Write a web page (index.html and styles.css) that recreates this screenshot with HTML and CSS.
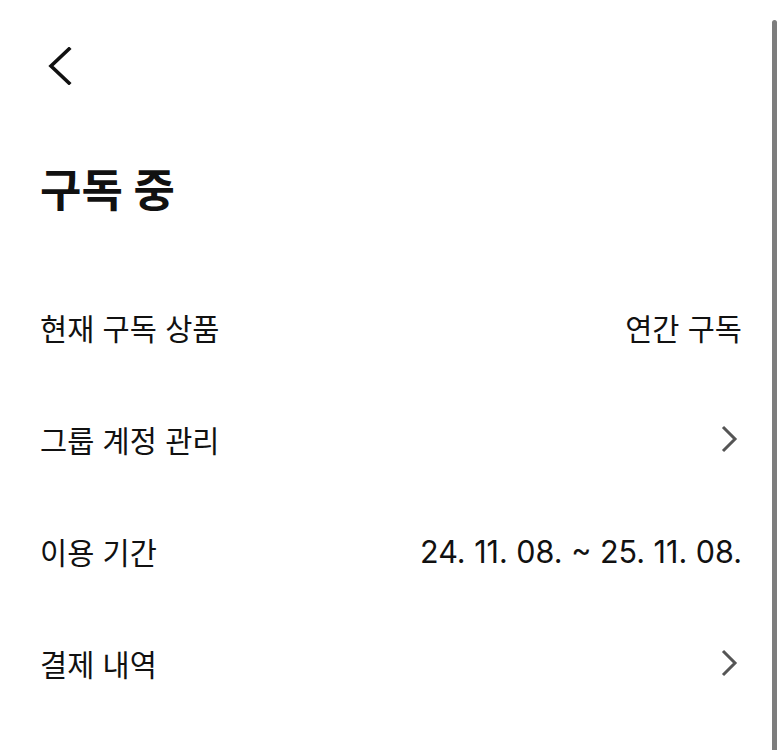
FILE: index.html
```html
<!DOCTYPE html>
<html lang="ko">
<head>
    <meta charset="UTF-8">
    <meta name="viewport" content="width=device-width, initial-scale=1.0">
    <title>구독 중</title>
    <link rel="stylesheet" href="styles.css">
</head>
<body>
    <div class="page">
        <header class="topbar">
            <button class="back-button" aria-label="뒤로">
                <svg width="26" height="38" viewBox="0 0 26 38">
                    <path d="M22 2 L4 19 L22 36" fill="none" stroke="#111" stroke-width="3.6" stroke-linecap="square"/>
                </svg>
            </button>
        </header>

        <h1 class="title">구독 중</h1>

        <ul class="rows">
            <li class="row">
                <span class="label">현재 구독 상품</span>
                <span class="value">연간 구독</span>
            </li>
            <li class="row">
                <span class="label">그룹 계정 관리</span>
                <svg class="chevron" width="18" height="28" viewBox="0 0 18 28">
                    <path d="M3 2 L15 14 L3 26" fill="none" stroke="#555" stroke-width="3"/>
                </svg>
            </li>
            <li class="row">
                <span class="label">이용 기간</span>
                <span class="value date">24. 11. 08. ~ 25. 11. 08.</span>
            </li>
            <li class="row">
                <span class="label">결제 내역</span>
                <svg class="chevron" width="18" height="28" viewBox="0 0 18 28">
                    <path d="M3 2 L15 14 L3 26" fill="none" stroke="#555" stroke-width="3"/>
                </svg>
            </li>
        </ul>

        <div class="scrollbar"></div>
    </div>
</body>
</html>
```

FILE: styles.css
```css
/* Estilos base */
body {
    margin: 0;
    padding: 0;
    background-color: #fff;
    color: #111;
    font-family: Inter, "Noto Sans CJK KR", sans-serif;
}
.page {
    position: relative;
    height: 750px;
    overflow: hidden;
    padding: 0 42px 0 40px;
}
.topbar {
    height: 132px;
    display: flex;
    align-items: center;
}
.back-button {
    background: none;
    border: none;
    padding: 0;
    margin-left: 7px;
    display: flex;
    cursor: pointer;
}
.title {
    margin: 34px 0 0;
    font-size: 45px;
    line-height: 50px;
    font-weight: 700;
}
.rows {
    list-style: none;
    margin: 55px 0 0;
    padding: 0;
}
.row {
    height: 112px;
    display: flex;
    align-items: center;
    justify-content: space-between;
    font-size: 29.5px;
}
.date {
    font-size: 30.5px;
}
.chevron {
    margin-right: 4px;
}
/* Barra de desplazamiento superpuesta */
.scrollbar {
    position: absolute;
    top: 20px;
    right: 7px;
    bottom: 0;
    width: 5px;
    border-radius: 3px 3px 0 0;
    background-color: #7d7d7d;
}
```
